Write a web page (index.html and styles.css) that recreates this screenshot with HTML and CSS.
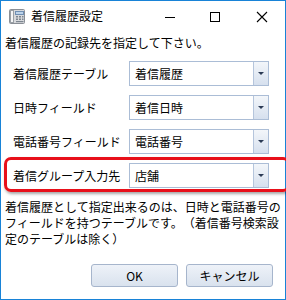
FILE: index.html
```html
<!DOCTYPE html>
<html lang="ja">
<head>
  <meta charset="UTF-8">
  <title>着信履歴設定</title>
  <link rel="stylesheet" href="styles.css">
</head>
<body>
  <div class="window">
    <div class="titlebar">
      <svg class="app-icon" width="16" height="16" viewBox="0 0 16 16">
        <rect x="0.5" y="1.5" width="15" height="14" rx="1" fill="#d7d9dc" stroke="#8a8f96"/>
        <rect x="1.5" y="2.5" width="3" height="12" fill="#f4f5f6" stroke="#9aa0a6"/>
        <rect x="6.5" y="3.5" width="8" height="3" fill="#bcd3ea" stroke="#6f8fb3"/>
        <rect x="7" y="8" width="2" height="1.5" fill="#7d8690"/>
        <rect x="10" y="8" width="2" height="1.5" fill="#7d8690"/>
        <rect x="13" y="8" width="1.5" height="1.5" fill="#7d8690"/>
        <rect x="7" y="10.5" width="2" height="1.5" fill="#7d8690"/>
        <rect x="10" y="10.5" width="2" height="1.5" fill="#7d8690"/>
        <rect x="13" y="10.5" width="1.5" height="1.5" fill="#7d8690"/>
        <rect x="7" y="13" width="7.5" height="1.2" fill="#7d8690"/>
      </svg>
      <span class="title">着信履歴設定</span>
      <div class="controls">
        <svg width="46" height="29" viewBox="0 0 46 29"><path d="M18 15.5h10" stroke="#000" stroke-width="1"/></svg>
        <svg width="46" height="29" viewBox="0 0 46 29"><rect x="17.5" y="10.5" width="9" height="9" fill="none" stroke="#000"/></svg>
        <svg width="46" height="29" viewBox="0 0 46 29"><path d="M18 10l10 10M28 10l-10 10" stroke="#000" stroke-width="1.1"/></svg>
      </div>
    </div>

    <div class="content">
      <p class="intro">着信履歴の記録先を指定して下さい。</p>

      <div class="form">
        <div class="row">
          <span class="label">着信履歴テーブル</span>
          <div class="combo"><span class="combo-text">着信履歴</span><span class="combo-btn"></span></div>
        </div>
        <div class="row">
          <span class="label">日時フィールド</span>
          <div class="combo"><span class="combo-text">着信日時</span><span class="combo-btn"></span></div>
        </div>
        <div class="row">
          <span class="label">電話番号フィールド</span>
          <div class="combo"><span class="combo-text">電話番号</span><span class="combo-btn"></span></div>
        </div>
        <div class="row marked">
          <span class="label">着信グループ入力先</span>
          <div class="combo"><span class="combo-text">店舗</span><span class="combo-btn"></span></div>
        </div>
      </div>

      <p class="note">着信履歴として指定出来るのは、日時と電話番号の<br>フィールドを持つテーブルです。（着信番号検索設<br>定のテーブルは除く）</p>

      <div class="buttons">
        <button class="btn">OK</button>
        <button class="btn">キャンセル</button>
      </div>
    </div>
  </div>
</body>
</html>
```

FILE: styles.css
```css
html,
body {
  margin: 0;
  padding: 0;
}

body {
  font-family: "Noto Sans CJK JP", "Noto Sans", sans-serif;
  font-size: 12px;
  color: #000;
  background: #fff;
  text-spacing-trim: space-all;
}

p {
  margin: 0;
}

.window {
  width: 286px;
  height: 300px;
  box-sizing: border-box;
  border: 1px solid #1883d7;
  background: #fff;
}

.titlebar {
  height: 29px;
  display: flex;
  align-items: center;
}

.app-icon {
  margin-left: 8px;
  margin-top: 1px;
}

.title {
  margin-left: 6px;
  font-size: 12px;
  line-height: 16px;
}

.controls {
  margin-left: auto;
  display: flex;
  margin-top: 1px;
}

.controls svg {
  display: block;
}

.content {
  padding: 5px 4px 0;
}

.intro {
  line-height: 16px;
}

.form {
  margin: 10px 0 0 8px;
  display: flex;
  flex-direction: column;
  gap: 9px;
}

.row {
  display: flex;
  align-items: center;
  position: relative;
}

.label {
  width: 116px;
  line-height: 16px;
}

.combo {
  display: flex;
  width: 140px;
  height: 25px;
  box-sizing: border-box;
  border: 1px solid #abbdd6;
  background: #fff;
}

.combo-text {
  flex: 1;
  padding-left: 5px;
  line-height: 23px;
}

.combo-btn {
  width: 14px;
  border-left: 1px solid #b5c5dc;
  background: linear-gradient(#f3f6fa, #d6e0ee);
  position: relative;
}

.combo-btn::after {
  content: "";
  position: absolute;
  left: 4px;
  top: 10px;
  border-left: 3px solid transparent;
  border-right: 3px solid transparent;
  border-top: 3px solid #2b3a55;
}

.marked::before {
  content: "";
  position: absolute;
  left: -9px;
  right: -9px;
  top: -6px;
  bottom: -4px;
  border: 3px solid #e8101a;
  border-radius: 7px;
  box-shadow: 1px 2px 3px rgba(0, 0, 0, 0.35);
  pointer-events: none;
}

.note {
  margin-top: 11px;
  line-height: 16px;
}

.buttons {
  display: flex;
  justify-content: flex-end;
  gap: 8px;
  margin: 17px 8px 0 0;
}

.btn {
  width: 87px;
  height: 23px;
  font-family: "Noto Sans CJK JP", "Noto Sans", sans-serif;
  font-size: 12px;
  color: #000;
  border: 1px solid #a6b5cc;
  border-radius: 3px;
  background: linear-gradient(#eef2f8, #d9e2ee);
  padding: 0;
}
```
